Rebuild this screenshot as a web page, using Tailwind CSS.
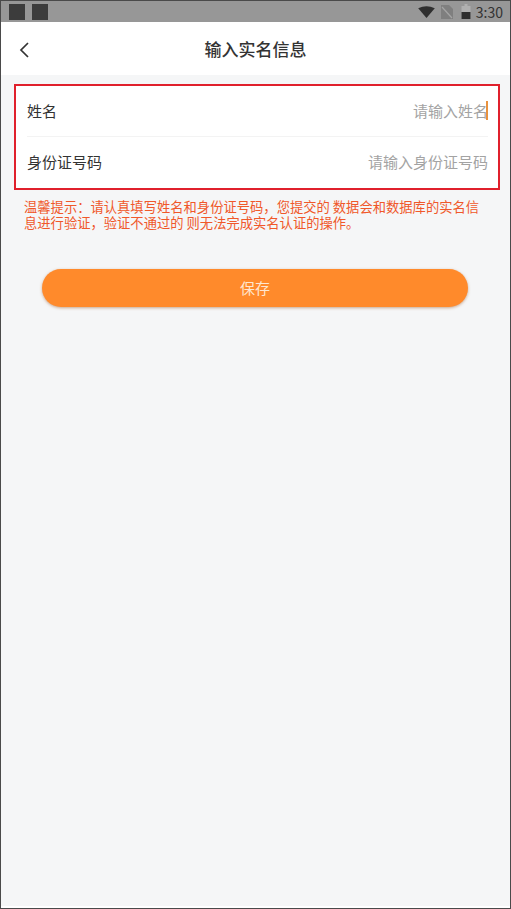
<!DOCTYPE html>
<html lang="zh">
<head>
<meta charset="utf-8">
<script src="https://cdn.jsdelivr.net/npm/@tailwindcss/browser@4"></script>
</head>
<body class="m-0 bg-white font-['Noto_Sans_CJK_SC','Noto_Sans',sans-serif]">
<div class="flex h-[909px] w-[511px] flex-col overflow-hidden border border-[#4a4a4a] bg-white pb-[2px]">
  <div class="flex h-[21px] shrink-0 items-center bg-[#979797] pl-[8px] pr-[7px]">
    <div class="h-[16px] w-[16px] bg-[#3c3c3c]"></div>
    <div class="ml-[7px] h-[16px] w-[16px] bg-[#3c3c3c]"></div>
    <svg class="ml-auto" width="17" height="12" viewBox="0 0 18 13"><path d="M0 2.5 Q9 -2 18 2.5 L9 13 Z" fill="#2f2f2f"/></svg>
    <svg class="ml-[6px]" width="12" height="14" viewBox="0 0 12 14"><path d="M0 0 H8 L12 4 V14 H0 Z" fill="#7f7f7f"/><path d="M1 2 L11 13" stroke="#a5a5a5" stroke-width="1.2"/></svg>
    <svg class="ml-[8px]" width="10" height="15" viewBox="0 0 9 15"><path d="M3 0 H6 V2 H9 V15 H0 V2 H3 Z" fill="#b0b0b0"/><path d="M0 8 H9 V15 H0 Z" fill="#2f2f2f"/></svg>
    <span class="ml-[5px] text-[14px] leading-none text-[#333]">3:30</span>
  </div>
  <div class="relative flex h-[53px] shrink-0 items-center justify-center bg-white">
    <svg class="absolute left-[17px] top-[19px]" width="12" height="18" viewBox="0 0 12 18" fill="none"><path d="M10 2 L3 9 L10 16" stroke="#333" stroke-width="1.7"/></svg>
    <span class="text-[17px] font-medium leading-none text-[#333]">输入实名信息</span>
  </div>
  <div class="flex flex-1 flex-col bg-[#f5f6f7]">
    <div class="ml-[13px] mr-[10px] mt-[9px] h-[106px] border-2 border-[#e0202c] bg-white pl-[11px] pr-[10px]">
      <div class="relative flex h-[51px] items-center justify-between border-b border-[#f3f3f3] text-[15px]">
        <span class="text-[#333]">姓名</span>
        <span class="text-[#a3a3a3]">请输入姓名</span>
        <span class="absolute right-[0px] top-[15px] h-[19px] w-[2px] bg-[#e8923e]"></span>
      </div>
      <div class="flex h-[51px] items-center justify-between text-[15px]">
        <span class="text-[#333]">身份证号码</span>
        <span class="text-[#a3a3a3]">请输入身份证号码</span>
      </div>
    </div>
    <p class="ml-[23px] mr-[26px] mt-[9px] text-[13.3px] leading-[16px] text-[#f0582a]">温馨提示：请认真填写姓名和身份证号码，您提交的 数据会和数据库的实名信息进行验证，验证不通过的 则无法完成实名认证的操作。</p>
    <button class="ml-[41px] mr-[42px] mt-[38px] flex h-[38px] items-center justify-center rounded-full bg-[#ff8a2b] text-[15px] text-[#ffe6d0] shadow-[0_1px_3px_rgba(160,90,40,0.5)]">保存</button>
  </div>
</div>
</body>
</html>
